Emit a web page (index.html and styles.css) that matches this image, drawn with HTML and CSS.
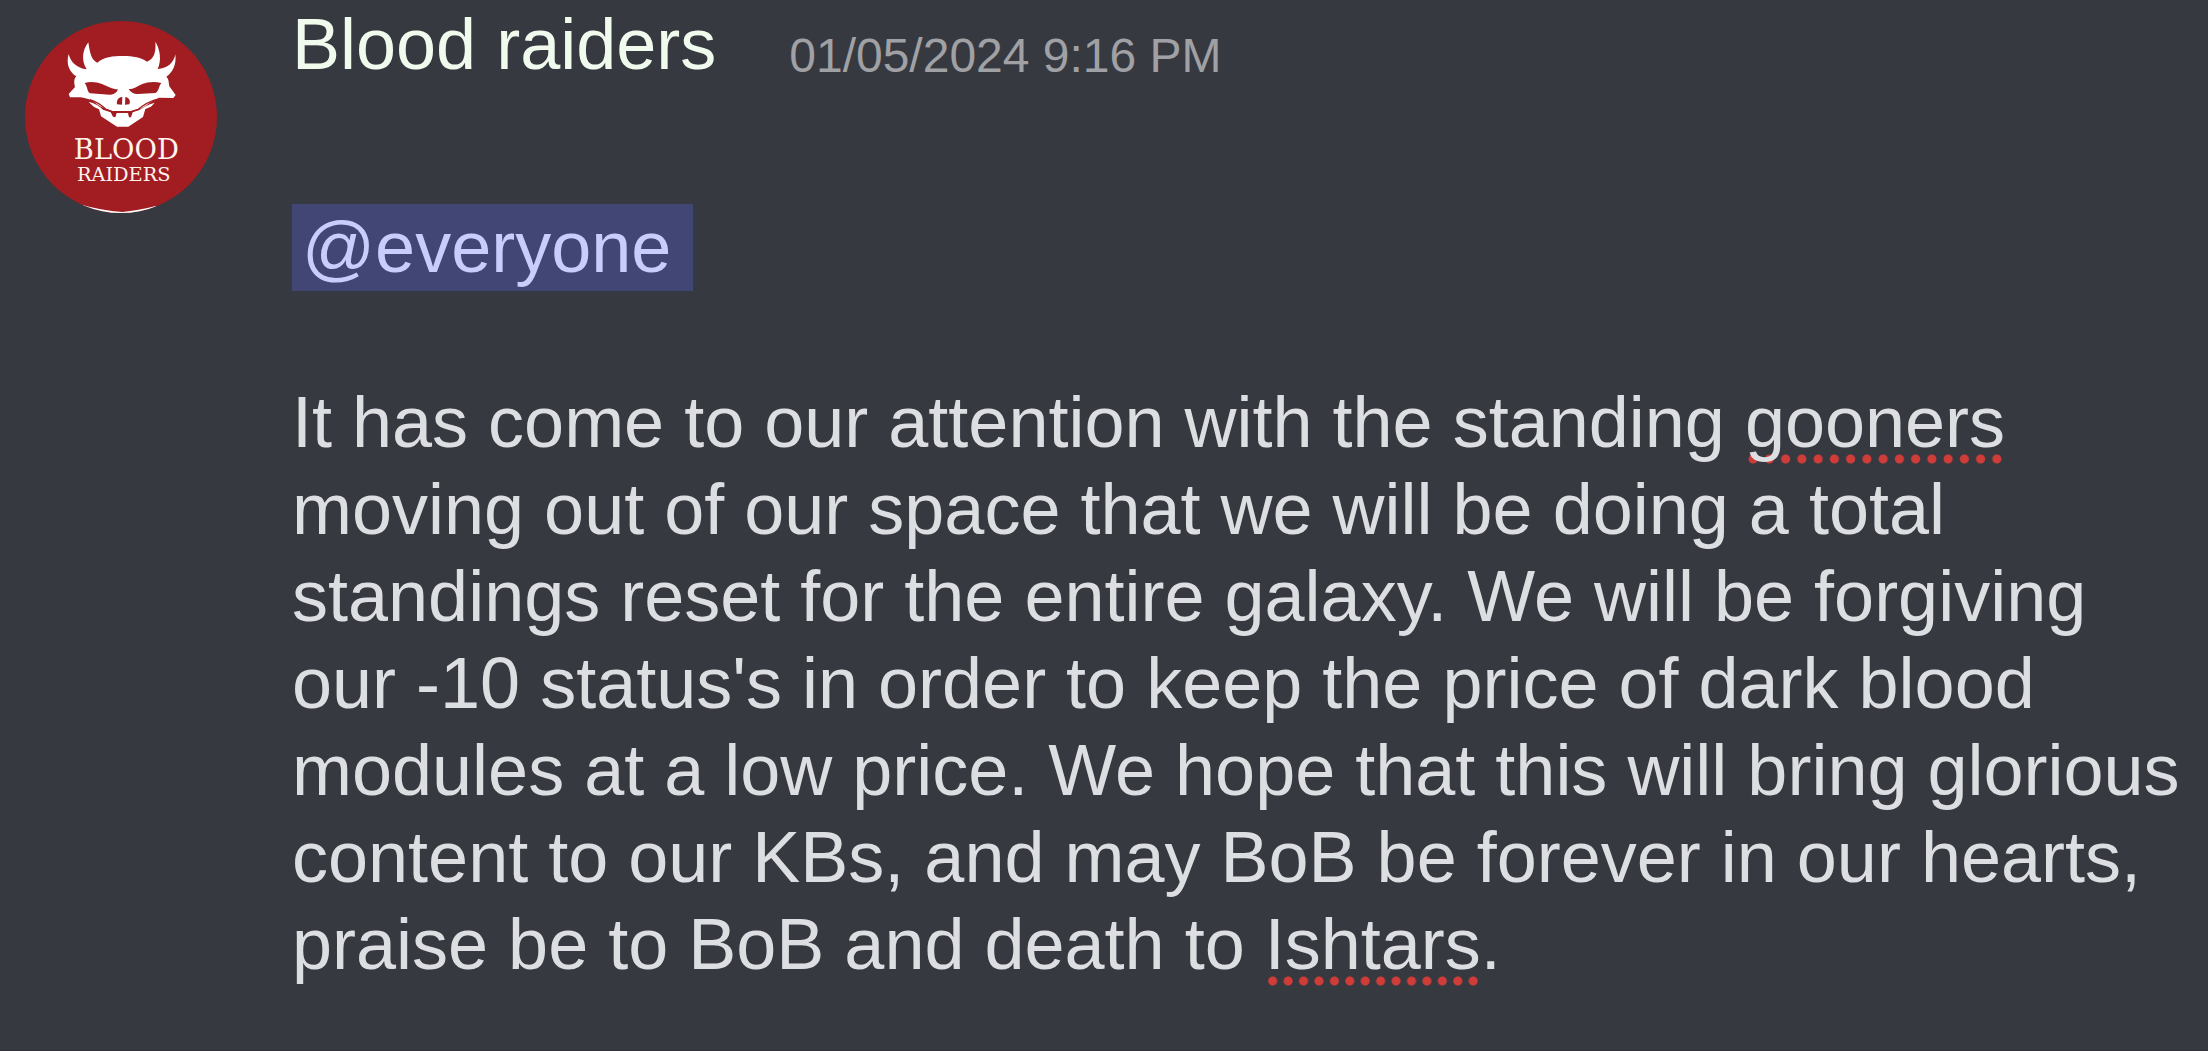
FILE: index.html
```html
<!DOCTYPE html>
<html lang="en">
<head>
    <meta charset="UTF-8">
    <meta name="viewport" content="width=device-width, initial-scale=1.0">
    <title>Blood raiders</title>
    <link rel="stylesheet" href="styles.css">
</head>
<body>

<article class="message">
    <svg class="avatar" viewBox="46 33 576 576" role="img" aria-label="Blood Raiders logo">
        <defs>
            <clipPath id="avatarClip"><circle cx="334" cy="321" r="288"/></clipPath>
        </defs>
        <g clip-path="url(#avatarClip)">
            <rect x="46" y="33" width="576" height="576" fill="#a21d21"/>
            <path fill="#fff" d="M215 584 Q275 601 338 606 Q385 602 438 588 L438 612 L215 612 Z"/>
            <!-- skull -->
            <path fill="#fff" d="M236 97 C240 122 243 150 263 158 C282 141 310 138 340 138 C370 138 395 143 412 155 C436 145 439 120 437 95 C452 119 456 151 444 177 C474 176 493 157 497 133 C501 163 489 188 470 200 C480 210 476 222 480 230 L498 255 L491 264 L448 263 C436 268 426 274 419 279 C407 289 397 295 383 298 L365 303 L308 303 L292 298 C277 293 265 286 255 277 C242 268 229 264 213 262 L181 262 L177 252 L196 231 C193 220 192 207 200 199 C180 187 168 162 177 132 C183 157 201 174 231 178 C215 154 217 121 236 97 Z"/>
            <!-- jaw -->
            <path fill="#fff" d="M237 276 C257 280 270 289 280 299 L303 307 L310 320 L317 322 L321 309 L355 309 L358 322 L364 322 L369 307 L389 300 C402 291 415 283 435 278 L424 290 L407 297 L400 321 L356 350 L322 350 L274 319 L268 298 L253 291 Z"/>
            <!-- eyes and nose -->
            <path fill="#a21d21" d="M225 219 C242 213 262 216 277 222 C294 229 308 238 325 238 C320 250 311 255 300 254 L241 250 C231 244 235 232 225 219 Z M455 219 C435 213 413 216 398 222 C383 229 372 237 357 238 C364 248 374 253 385 252 L437 249 C449 243 446 230 455 219 Z"/>
            <path fill="#a21d21" d="M338 261 C326 260 320 272 322 283 L337 284 Z M347 261 C357 262 364 272 359 283 L346 284 Z"/>
            <path fill="none" stroke="#a21d21" stroke-width="4" d="M240 269 Q265 276 288 297 L307 305 H364 L386 298 Q411 277 438 269"/>
            <text class="logo-blood" x="350" y="448">BLOOD</text>
            <text class="logo-raiders" x="342" y="512">RAIDERS</text>
        </g>
    </svg>

    <div class="content">
        <header class="message-header">
            <h1 class="author">Blood raiders</h1>
            <time class="timestamp" datetime="2024-01-05T21:16">01/05/2024 9:16 PM</time>
        </header>
        <span class="mention">@everyone</span>
        <p class="message-text">It has come to our attention with the standing <span class="misspelled">gooners</span> moving out of our space that we will be doing a total standings reset for the entire galaxy. We will be forgiving our -10 status's in order to keep the price of dark blood modules at a low price. We hope that this will bring glorious content to our KBs, and may BoB be forever in our hearts, praise be to BoB and death to <span class="misspelled">Ishtars</span>.</p>
    </div>
</article>

</body>
</html>
```

FILE: styles.css
```css
* {
    box-sizing: border-box;
}

body {
    margin: 0;
    min-height: 100vh;
    border-bottom: 1px solid #33303a;
    background-color: #373941;
    color: #dcdee1;
    font-family: "Liberation Sans", Arial, sans-serif;
    font-size: 72px;
    line-height: 87px;
}

.message {
    display: flex;
    gap: 75px;
    padding: 1px 24px 0 25px;
}

.avatar {
    flex: none;
    width: 192px;
    height: 192px;
    margin-top: 20px;
}

.logo-blood,
.logo-raiders {
    fill: #fff3ee;
    font-family: "DejaVu Serif", serif;
    text-anchor: middle;
}

.logo-blood {
    font-size: 82px;
}

.logo-raiders {
    font-size: 58px;
}

.content {
    flex: 1;
    min-width: 0;
}

.message-header {
    display: flex;
    align-items: flex-end;
    gap: 73px;
    margin-bottom: 116px;
}

.author {
    margin: 0;
    color: #f0fbee;
    font-size: 72px;
    font-weight: normal;
}

.timestamp {
    color: #a0a1a5;
    font-size: 48px;
    line-height: 64px;
}

.mention {
    display: block;
    width: fit-content;
    padding: 0 22px 0 10px;
    background-color: #414675;
    color: #c9cdfb;
}

.message-text {
    margin: 88px 0 0;
}

.misspelled {
    padding-bottom: 2px;
    background-image: radial-gradient(circle, #d03c38 4px, transparent 5px);
    background-position: left bottom;
    background-size: 16px 10px;
    background-repeat: round no-repeat;
}
```
